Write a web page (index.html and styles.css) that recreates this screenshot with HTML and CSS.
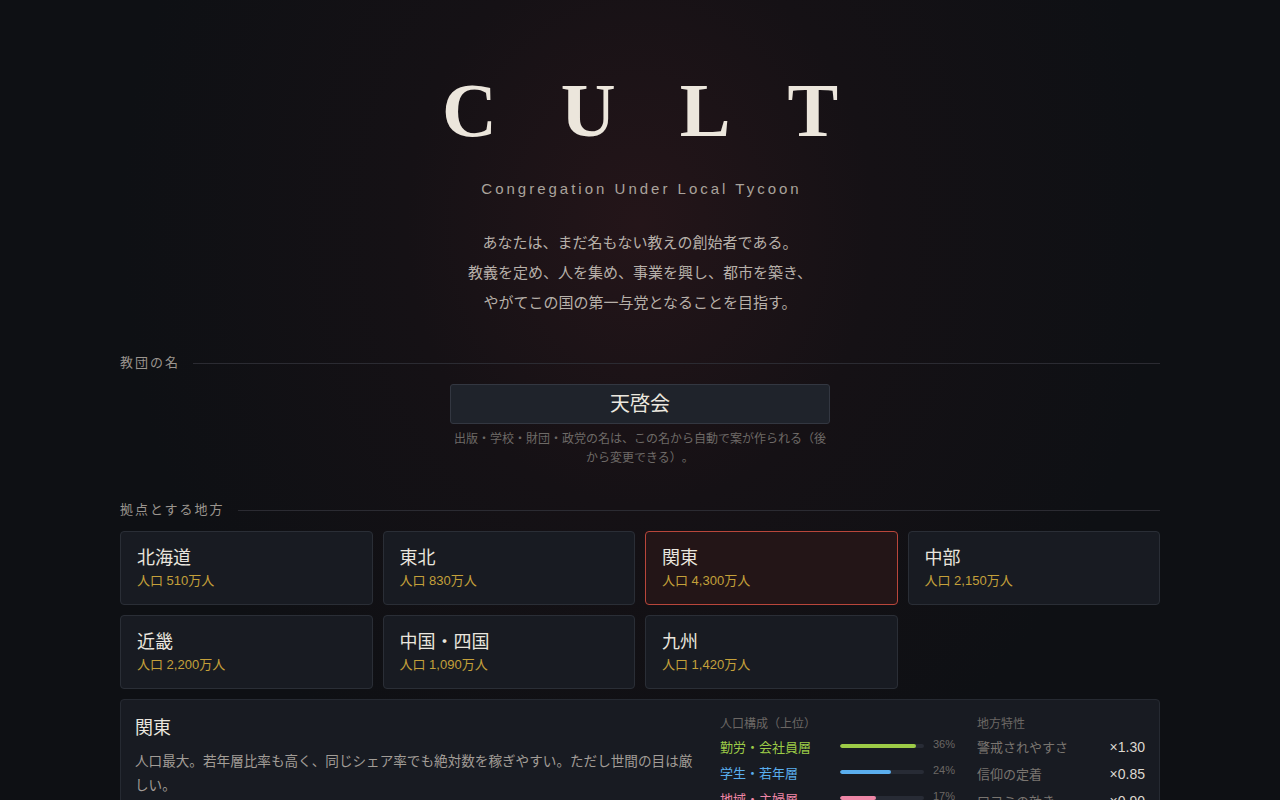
FILE: index.html
```html
<!DOCTYPE html>
<html lang="ja">
<head>
<meta charset="utf-8">
<title>CULT</title>
<link rel="stylesheet" href="styles.css">
</head>
<body>
<main class="page">
  <header class="hero">
    <h1 class="logo">CULT</h1>
    <p class="subtitle">Congregation Under Local Tycoon</p>
    <p class="intro">あなたは、まだ名もない教えの創始者である。<br>教義を定め、人を集め、事業を興し、都市を築き、<br>やがてこの国の第一与党となることを目指す。</p>
  </header>

  <section class="section">
    <h2 class="section-title"><span>教団の名</span></h2>
    <div class="name-field">
      <input class="name-input" type="text" value="天啓会">
      <p class="help">出版・学校・財団・政党の名は、この名から自動で案が作られる（後から変更できる）。</p>
    </div>
  </section>

  <section class="section">
    <h2 class="section-title"><span>拠点とする地方</span></h2>
    <div class="regions">
      <div class="region"><div class="region-name">北海道</div><div class="region-pop">人口 510万人</div></div>
      <div class="region"><div class="region-name">東北</div><div class="region-pop">人口 830万人</div></div>
      <div class="region selected"><div class="region-name">関東</div><div class="region-pop">人口 4,300万人</div></div>
      <div class="region"><div class="region-name">中部</div><div class="region-pop">人口 2,150万人</div></div>
      <div class="region"><div class="region-name">近畿</div><div class="region-pop">人口 2,200万人</div></div>
      <div class="region"><div class="region-name">中国・四国</div><div class="region-pop">人口 1,090万人</div></div>
      <div class="region"><div class="region-name">九州</div><div class="region-pop">人口 1,420万人</div></div>
    </div>

    <div class="detail">
      <div class="detail-main">
        <div class="detail-name">関東</div>
        <p class="detail-desc">人口最大。若年層比率も高く、同じシェア率でも絶対数を稼ぎやすい。ただし世間の目は厳しい。</p>
      </div>
      <div class="detail-demo">
        <div class="col-head">人口構成（上位）</div>
        <div class="demo-row"><span class="demo-label green">勤労・会社員層</span><span class="bar"><span class="fill green-bg" style="width:90%"></span></span><span class="pct">36%</span></div>
        <div class="demo-row"><span class="demo-label blue">学生・若年層</span><span class="bar"><span class="fill blue-bg" style="width:61%"></span></span><span class="pct">24%</span></div>
        <div class="demo-row"><span class="demo-label pink">地域・主婦層</span><span class="bar"><span class="fill pink-bg" style="width:43%"></span></span><span class="pct">17%</span></div>
        <div class="demo-row"><span class="demo-label amber">高齢・年金層</span><span class="bar"><span class="fill amber-bg" style="width:30%"></span></span><span class="pct">12%</span></div>
      </div>
      <div class="detail-traits">
        <div class="col-head">地方特性</div>
        <div class="trait-row"><span class="trait-label">警戒されやすさ</span><span class="trait-val">×1.30</span></div>
        <div class="trait-row"><span class="trait-label">信仰の定着</span><span class="trait-val">×0.85</span></div>
        <div class="trait-row"><span class="trait-label">口コミの効き</span><span class="trait-val">×0.90</span></div>
        <div class="trait-row"><span class="trait-label">事業収益</span><span class="trait-val">×1.20</span></div>
      </div>
    </div>
  </section>
</main>
</body>
</html>
```

FILE: styles.css
```css
* { box-sizing: border-box; }

html, body {
  margin: 0;
  padding: 0;
}

body {
  min-height: 100vh;
  background-color: #0e1014;
  background-image: radial-gradient(ellipse 520px 620px at 50% 25%, rgba(40, 22, 26, 0.85) 0%, rgba(28, 18, 22, 0.5) 45%, rgba(14, 16, 20, 0) 100%);
  color: #d8d3cc;
  font-family: "Liberation Sans", "Noto Sans CJK JP", sans-serif;
  text-spacing-trim: space-all;
}

.page {
  width: 1040px;
  margin: 0 auto;
  padding-top: 72px;
  padding-bottom: 40px;
}

.hero {
  text-align: center;
}

.logo {
  margin: 0;
  font-family: "Liberation Serif", "Noto Sans CJK JP", serif;
  font-weight: bold;
  font-size: 76px;
  line-height: 76px;
  letter-spacing: 64px;
  padding-left: 64px;
  color: #ece6dc;
}

.subtitle {
  margin: 31px 0 0;
  font-size: 15px;
  line-height: 20px;
  letter-spacing: 3px;
  padding-left: 3px;
  color: #aaa39c;
}

.intro {
  margin: 29px 0 0;
  font-size: 15px;
  line-height: 30px;
  color: #b7b0a9;
}

.section-title {
  display: flex;
  align-items: center;
  gap: 13px;
  margin: 0;
  font-weight: normal;
  font-size: 13px;
  line-height: 20px;
  letter-spacing: 2px;
  color: #9b958f;
}

.section-title::after {
  content: "";
  flex: 1;
  height: 1px;
  background: #2b2b32;
}

.section { margin-top: 32px; }
.section:first-of-type { margin-top: 0; }
.section:first-of-type .section-title { margin-top: 35px; }

.name-field {
  width: 380px;
  margin: 11px auto 0;
  text-align: center;
}

.name-input {
  display: block;
  width: 380px;
  height: 40px;
  margin: 0;
  padding: 0 12px 3px;
  background: #1f232b;
  border: 1px solid #333741;
  border-radius: 3px;
  color: #ebe7df;
  font-family: "Liberation Sans", "Noto Sans CJK JP", sans-serif;
  font-size: 20px;
  text-align: center;
  outline: none;
}

.help {
  margin: 6px 0 0;
  font-size: 12px;
  line-height: 19px;
  color: #6e6a67;
}

.regions {
  display: grid;
  grid-template-columns: repeat(4, 1fr);
  gap: 10px;
  margin-top: 11px;
}

.region {
  height: 74px;
  padding: 14px 16px 0;
  background: #181b22;
  border: 1px solid #2a2e36;
  border-radius: 4px;
}

.region.selected {
  background: #231517;
  border-color: #b9463b;
}

.region-name {
  font-size: 18px;
  line-height: 24px;
  color: #e9e5de;
}

.region-pop {
  margin-top: 1px;
  font-size: 13px;
  line-height: 20px;
  color: #c4a03a;
}

.detail {
  display: grid;
  grid-template-columns: 1fr 235px 168px;
  gap: 22px;
  margin-top: 10px;
  padding: 16px 14px 20px;
  background: #181b22;
  border: 1px solid #262a32;
  border-radius: 4px;
}

.detail-name {
  font-size: 18px;
  line-height: 24px;
  color: #e9e5de;
}

.detail-desc {
  margin: 10px 0 0;
  font-size: 13.6px;
  line-height: 24px;
  color: #a29d97;
}

.col-head {
  margin-top: -1px;
  font-size: 12px;
  line-height: 18px;
  color: #6b6764;
}

.demo-row {
  display: flex;
  align-items: center;
  height: 26px;
}

.demo-row:first-of-type { margin-top: 2px; }

.demo-label {
  width: 120px;
  font-size: 13px;
}

.green { color: #9ccb47; }
.blue { color: #5aaeee; }
.pink { color: #ee86a6; }
.amber { color: #d9a04a; }

.bar {
  width: 84px;
  height: 4px;
  background: #272b35;
  border-radius: 2px;
  overflow: hidden;
}

.fill {
  display: block;
  height: 100%;
  border-radius: 2px;
}

.green-bg { background: #9ccb47; }
.blue-bg { background: #5aaeee; }
.pink-bg { background: #ee86a6; }
.amber-bg { background: #d9a04a; }

.pct {
  flex: 1;
  text-align: right;
  font-size: 11px;
  color: #6b6764;
  position: relative;
  top: -2px;
}

.trait-row {
  display: flex;
  justify-content: space-between;
  align-items: center;
  height: 27px;
}

.trait-label {
  font-size: 13px;
  color: #7a7570;
}

.trait-val {
  font-size: 14px;
  color: #ddd8d0;
}
```
